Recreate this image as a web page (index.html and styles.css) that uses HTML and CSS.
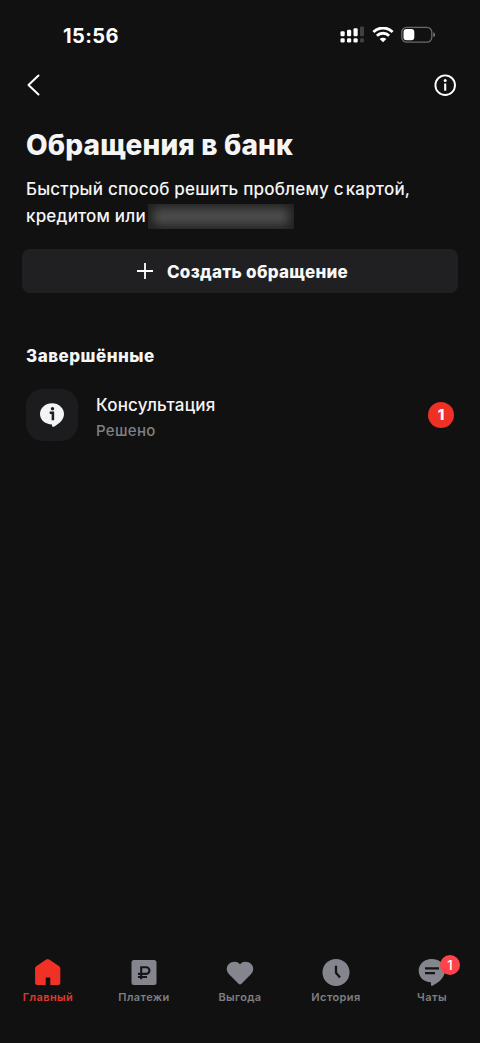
FILE: index.html
```html
<!DOCTYPE html>
<html lang="ru">
<head>
<meta charset="utf-8">
<title>Обращения в банк</title>
<link rel="stylesheet" href="styles.css">
</head>
<body>
<div class="screen">
  <div class="status">
    <span class="time">15:56</span>
    <div class="indicators">
      <svg class="signal" width="24" height="18" viewBox="0 0 24 18" fill="#fff">
        <rect x="0.5" y="5.3" width="4.2" height="5" rx="1.2"/><rect x="7" y="3.8" width="4.2" height="6.5" rx="1.2"/><rect x="13.5" y="2.2" width="4.2" height="8.1" rx="1.2"/><rect x="20" y="0.4" width="4" height="9.9" rx="1.2" fill="#414141"/>
        <rect x="0.5" y="12.2" width="4.2" height="4.4" rx="1.4"/><rect x="7" y="12.2" width="4.2" height="4.4" rx="1.4"/><rect x="13.5" y="12.2" width="4.2" height="4.4" rx="1.4"/><rect x="20" y="12.2" width="4" height="4.4" rx="1.4" fill="#414141"/>
      </svg>
      <svg class="wifi" width="22" height="16" viewBox="0 0 22 16" fill="none" stroke="#fff" stroke-width="2.8">
        <path d="M1.400 5a13.500 13.500 0 0 1 19.200 0"/><path d="M4.900 8.800a8.600 8.600 0 0 1 12.200 0"/><path d="M7.700 12a4.700 4.700 0 0 1 6.600 0L11 15.300z" fill="#fff" stroke="none"/>
      </svg>
      <svg class="battery" width="35" height="18" viewBox="0 0 35 18">
        <rect x="0.8" y="1.3" width="30" height="14.8" rx="4.8" fill="none" stroke="#6a6a6a" stroke-width="1.3"/>
        <rect x="2.5" y="3" width="10.8" height="11.2" rx="3" fill="#fff"/>
        <path d="M32.3 6.200c2.400.8 2.400 4.100 0 4.900z" fill="#777"/>
      </svg>
    </div>
  </div>
  <header class="nav">
    <svg class="back" width="14" height="22" viewBox="0 0 14 22" fill="none" stroke="#fff" stroke-width="2" stroke-linecap="round" stroke-linejoin="round"><path d="M11.500 1.500L1.500 11l10 9.500"/></svg>
    <svg class="info" width="22" height="22" viewBox="0 0 22 22" fill="none" stroke="#fff"><circle cx="11.200" cy="11.200" r="9.800" stroke-width="1.900"/><circle cx="11.200" cy="6.600" r="1.500" fill="#fff" stroke="none"/><path d="M11.200 9.500v7.200" stroke-width="2.100"/></svg>
  </header>
  <main>
    <h1 class="title">Обращения в банк</h1>
    <div class="lead">
      <p class="lead-first">Быстрый способ решить проблему <span class="tight">с</span>картой,</p>
      <p class="lead-second">кредитом или<span class="redacted"><span class="smudge"></span></span></p>
    </div>
    <button class="create">
      <svg width="16" height="16" viewBox="0 0 16 16" stroke="#fff" stroke-width="1.8"><path d="M8 0v16M0 8h16"/></svg>
      <span class="create-text">Создать обращение</span>
    </button>
    <h2 class="section">Завершённые</h2>
    <div class="row">
      <div class="tile">
        <svg width="24" height="24" viewBox="0 0 24 24"><path d="M12 .3c6.700 0 12 4.800 12 10.800 0 5.400-4.300 9.500-10.100 12.600-.9.400-1.900 0-1.900-1V21.500C5.300 21.500 0 17 0 11.100S5.300.3 12 .3z" fill="#f2f4f6"/><circle cx="12.500" cy="5.800" r="1.700" fill="#1c1c1e"/><path d="M9.700 9.800h3.200v7.400" fill="none" stroke="#1c1c1e" stroke-width="2.500"/></svg>
      </div>
      <div class="row-text"><span class="name">Консультация</span><span class="state">Решено</span></div>
      <span class="count">1</span>
    </div>
  </main>
  <nav class="tabs">
    <div class="tab active">
      <svg width="28" height="28" viewBox="0 0 28 28" fill="#f03226"><path d="M2.200 8.300L12.200 1.500q1.500-1 3 0l10 6.800q1.100.8 1.100 2.200V25q0 2-2 2H16.300v-7q0-.5-.5-.5h-3.600q-.5 0-.5.5v7H3.100q-2 0-2-2V10.500q0-1.400 1.100-2.200z"/></svg>
      <span class="label">Главный</span>
    </div>
    <div class="tab">
      <svg width="28" height="28" viewBox="0 0 28 28"><rect x="1.500" y="2" width="25" height="25" rx="2.500" fill="#85858d"/><path d="M11.200 21.300V9.200h4.900a3.350 3.350 0 0 1 0 6.700H8M8 19h9" fill="none" stroke="#151518" stroke-width="2.100"/></svg>
      <span class="label">Платежи</span>
    </div>
    <div class="tab">
      <svg width="28" height="28" viewBox="0 0 28 28"><path d="M14 6.200C11.500 2.900 6 2.900 2.800 5.900c-3 3.100-2.500 7.700.3 10.400l9.400 9.400q1.500 1.400 3 0l9.400-9.400c2.800-2.700 3.300-7.300.3-10.400C22 2.900 16.500 2.900 14 6.200z" fill="#85858d"/></svg>
      <span class="label">Выгода</span>
    </div>
    <div class="tab">
      <svg width="28" height="28" viewBox="0 0 28 28"><circle cx="14" cy="14.400" r="13.500" fill="#85858d"/><path d="M14 7.800v7l4 4.700" fill="none" stroke="#151518" stroke-width="2.300"/></svg>
      <span class="label">История</span>
    </div>
    <div class="tab">
      <div class="chat">
        <svg width="28" height="28" viewBox="0 0 28 28"><path d="M13.500 1C21 1 27 5.800 27 12.300c0 6.900-5.700 12-12.500 15.500-.9.400-1.600 0-1.600-1v-2.600C6 24.200.7 19.200.7 12.700S6 1 13.500 1z" fill="#85858d"/><path d="M7 10.400h14M7 15.100h10" stroke="#151518" stroke-width="2.300"/></svg>
        <span class="bubble">1</span>
      </div>
      <span class="label">Чаты</span>
    </div>
  </nav>
</div>
</body>
</html>
```
FILE: styles.css
```css
* { box-sizing: border-box; }
body { margin: 0; background: #111; color: #f5f5f6; font-family: Inter, "Noto Sans", sans-serif; }
svg { display: block; flex: none; }
h1, h2, p { margin: 0; white-space: nowrap; }
.screen { width: 480px; height: 1043px; display: flex; flex-direction: column; overflow: hidden; background: #111; }
.status { height: 70px; padding: 0 43px 0 63px; display: flex; justify-content: space-between; align-items: center; }
.time { font-size: 20px; font-weight: 700; line-height: 24px; padding-top: 2px; letter-spacing: .4px; color: #fff; }
.indicators { display: flex; align-items: center; }
.wifi { margin-left: 8px; }
.battery { margin-left: 7px; margin-right: 1px; }
.nav { height: 30px; padding: 0 24px 0 27px; display: flex; justify-content: space-between; align-items: center; }
main { flex: 1; padding: 28px 22px 0; }
.title { margin-left: 4px; font-size: 28px; line-height: 34px; font-weight: 800; letter-spacing: .16px; }
.lead { margin: 14px 0 0 4px; font-size: 17px; line-height: 27px; font-weight: 500; letter-spacing: .2px; }
.tight { margin-right: 2px; }
.lead-second { display: flex; height: 26px; line-height: 26px; }
.redacted { margin: 1px 0 0 2px; width: 146px; height: 25px; background: #222; overflow: hidden; display: flex; align-items: center; justify-content: center; }
.smudge { width: 136px; height: 17px; border-radius: 6px; background: #4c4c4c; filter: blur(5px); }
.create { margin: 20px 0 0; width: 436px; height: 44px; padding: 2px 0 0 5px; border: 0; border-radius: 8px; background: #202022; color: #f8f8f8; font: 800 17px/22px Inter, "Noto Sans", sans-serif; letter-spacing: .3px; display: flex; align-items: center; justify-content: center; gap: 14px; }
.create svg { margin-top: -2px; }
.section { margin: 52px 0 0 4px; font-size: 17px; line-height: 22px; font-weight: 800; letter-spacing: .5px; }
.row { height: 52px; margin: 22px 4px 0; display: flex; align-items: center; }
.tile { width: 52px; height: 52px; border-radius: 17px; background: #1c1c1e; display: flex; align-items: center; justify-content: center; }
.row-text { flex: 1; margin-left: 18px; padding-top: 5px; display: flex; flex-direction: column; align-items: flex-start; }
.name { font-size: 17px; font-weight: 500; line-height: 26px; letter-spacing: .18px; }
.state { font-size: 15px; font-weight: 500; line-height: 26px; letter-spacing: .3px; color: #808082; }
.count { width: 26px; height: 26px; border-radius: 50%; background: #ee3124; color: #fff; font-size: 15px; line-height: 26px; font-weight: 800; text-align: center; }
.tabs { height: 85px; display: flex; }
.tab { width: 96px; display: flex; flex-direction: column; align-items: center; color: #7e7e82; }
.active { color: #e03a2f; }
.label { margin-top: 3px; font-size: 11px; font-weight: 600; line-height: 16px; letter-spacing: .4px; }
.chat { position: relative; }
.bubble { position: absolute; left: 22px; top: -3px; width: 20px; height: 20px; border-radius: 50%; background: #ff434b; color: #fff; font-size: 13px; font-weight: 500; line-height: 20px; text-align: center; }
```
